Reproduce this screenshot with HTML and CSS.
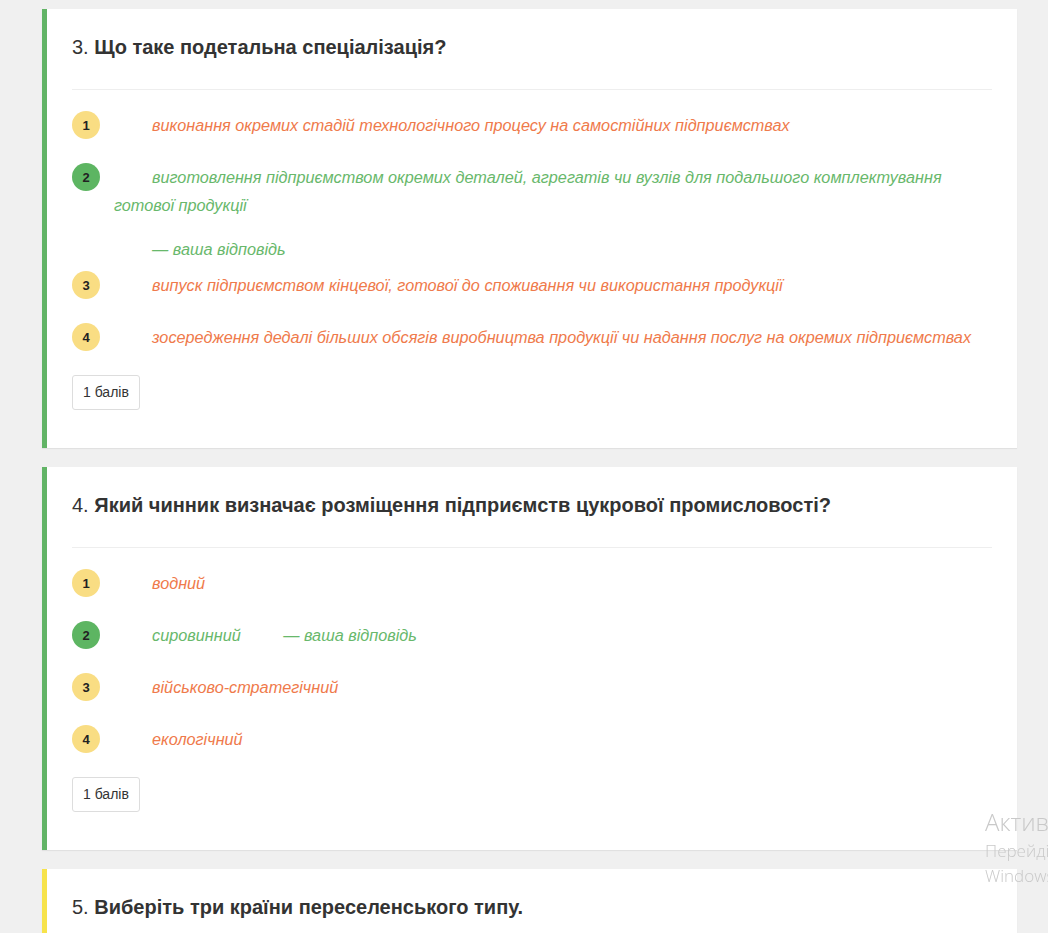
FILE: index.html
```html
<!DOCTYPE html>
<html lang="uk">
<head>
<meta charset="utf-8">
<title>Тест</title>
<link rel="stylesheet" href="styles.css">
</head>
<body>
<div class="page">
  <div class="card card-ok">
    <h3 class="q"><span class="q-num">3.</span> <b>Що таке подетальна спеціалізація?</b></h3>
    <div class="sep"></div>
    <div class="opt">
      <span class="badge badge-y">1</span>
      <div class="opt-body"><span class="txt txt-wrong">виконання окремих стадій технологічного процесу на самостійних підприємствах</span></div>
    </div>
    <div class="opt">
      <span class="badge badge-g">2</span>
      <div class="opt-body"><span class="txt txt-right">виготовлення підприємством окремих деталей, агрегатів чи вузлів для подальшого комплектування готової продукції</span> <span class="mine">— ваша відповідь</span></div>
    </div>
    <div class="opt">
      <span class="badge badge-y">3</span>
      <div class="opt-body"><span class="txt txt-wrong">випуск підприємством кінцевої, готової до споживання чи використання продукції</span></div>
    </div>
    <div class="opt">
      <span class="badge badge-y">4</span>
      <div class="opt-body"><span class="txt txt-wrong">зосередження дедалі більших обсягів виробництва продукції чи надання послуг на окремих підприємствах</span></div>
    </div>
    <span class="points">1 балів</span>
  </div>

  <div class="card card-ok">
    <h3 class="q"><span class="q-num">4.</span> <b>Який чинник визначає розміщення підприємств цукрової промисловості?</b></h3>
    <div class="sep"></div>
    <div class="opt">
      <span class="badge badge-y">1</span>
      <div class="opt-body"><span class="txt txt-wrong">водний</span></div>
    </div>
    <div class="opt">
      <span class="badge badge-g">2</span>
      <div class="opt-body"><span class="txt txt-right">сировинний</span> <span class="mine">— ваша відповідь</span></div>
    </div>
    <div class="opt">
      <span class="badge badge-y">3</span>
      <div class="opt-body"><span class="txt txt-wrong">військово-стратегічний</span></div>
    </div>
    <div class="opt">
      <span class="badge badge-y">4</span>
      <div class="opt-body"><span class="txt txt-wrong">екологічний</span></div>
    </div>
    <span class="points">1 балів</span>
  </div>

  <div class="card card-part">
    <h3 class="q"><span class="q-num">5.</span> <b>Виберіть три країни переселенського типу.</b></h3>
  </div>
</div>

<div class="watermark">
  <div class="wm-title">Активуйте Windows</div>
  <div class="wm-sub">Перейдіть до розділу "Настройки", щоб активувати</div>
  <div class="wm-sub">Windows.</div>
</div>
</body>
</html>
```

FILE: styles.css
```css
html {
  overflow: hidden;
}

body {
  margin: 0;
  background: #f0f0f0;
  font-family: "Liberation Sans", Arial, sans-serif;
  color: #333;
}

.page {
  width: 975px;
  margin-left: 42px;
  padding-top: 9px;
}

.card {
  background: #fff;
  border-left: 5px solid #5cb85c;
  padding: 24px 25px 38px 25px;
  margin-bottom: 19px;
  box-shadow: 0 1px 1px rgba(0, 0, 0, 0.06);
}

.card-ok {
  border-left-color: #62b466;
}

.card-part {
  border-left-color: #f7e34a;
  min-height: 120px;
}

.q {
  margin: 0 0 28px 0;
  font-size: 20px;
  line-height: 28px;
  font-weight: 400;
  color: #333;
}

.q b {
  font-weight: 700;
}

.sep {
  height: 1px;
  background: #eeeeee;
  margin-bottom: 21px;
}

.opt {
  display: flex;
  align-items: flex-start;
  margin-bottom: 8px;
}

.badge {
  flex: none;
  width: 28px;
  height: 28px;
  border-radius: 50%;
  display: flex;
  align-items: center;
  justify-content: center;
  font-size: 13px;
  font-weight: 700;
  color: #222;
}

.badge-y {
  background: #f9dd83;
}

.badge-g {
  background: #5db562;
}

.opt-body {
  flex: 1;
  margin-left: 14px;
  font-size: 16.25px;
  line-height: 28px;
  font-style: italic;
}

.txt {
  display: inline-block;
  text-indent: 38px;
  margin-bottom: 16px;
}

.txt-wrong {
  color: #ef7a4b;
}

.txt-right {
  color: #68b86b;
}

.mine {
  margin-left: 38px;
  color: #68b86b;
}

.points {
  display: inline-block;
  border: 1px solid #dddddd;
  border-radius: 3px;
  padding: 8px 10px;
  font-size: 14px;
  line-height: 17px;
  color: #333;
}

.watermark {
  position: fixed;
  left: 985px;
  top: 806px;
  white-space: nowrap;
  color: #c9c9c9;
  font-family: "Open Sans", "Noto Sans", sans-serif;
  font-weight: 300;
}

.wm-title {
  font-size: 24px;
  line-height: 32px;
}

.wm-sub {
  font-size: 17px;
  line-height: 25px;
}
```
